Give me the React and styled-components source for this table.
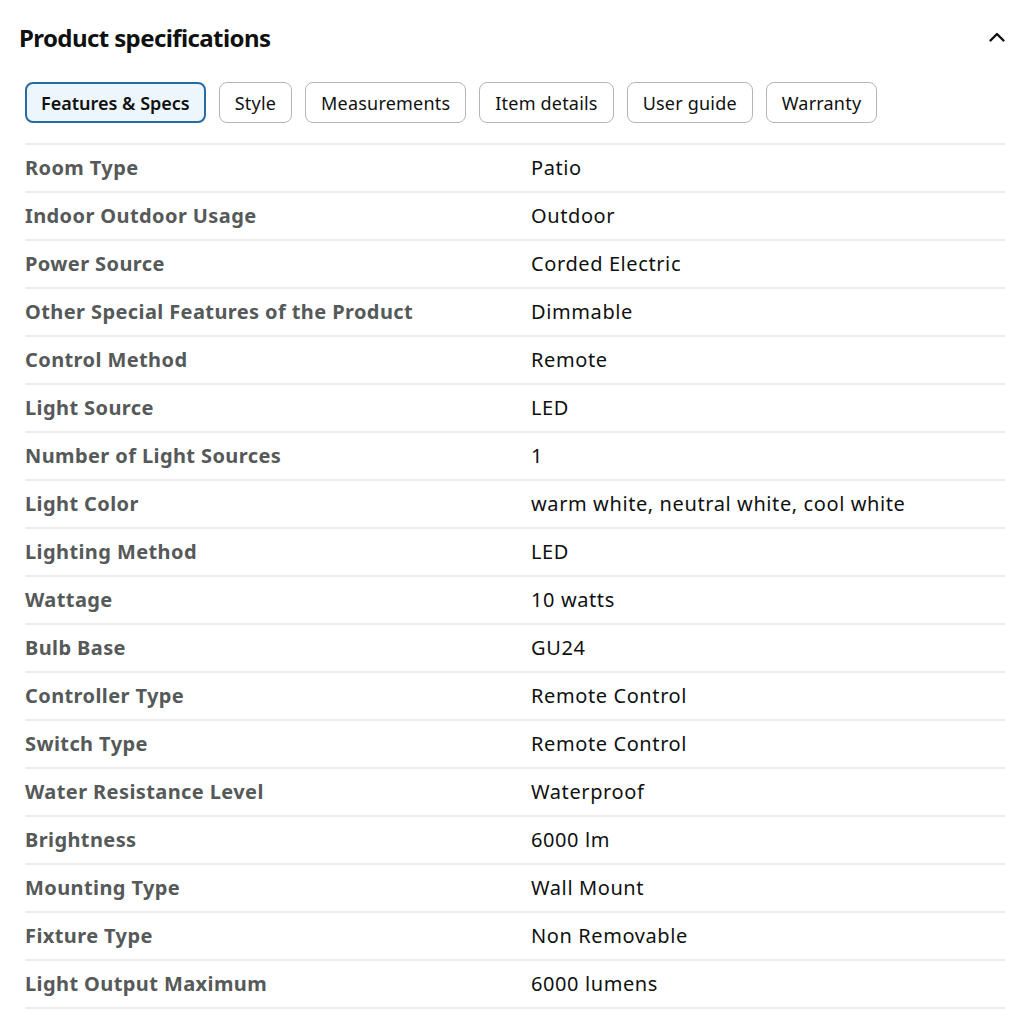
import React from "react";
import styled, { createGlobalStyle } from "styled-components";

const GlobalStyle = createGlobalStyle`
  body {
    margin: 0;
    background: #fff;
    font-family: "Noto Sans", "Open Sans", sans-serif;
  }
`;

const Page = styled.div`
  width: 1024px;
  padding: 0 19px 0 25px;
  box-sizing: border-box;
`;

const Header = styled.div`
  display: flex;
  align-items: center;
  justify-content: space-between;
  height: 74px;
  margin-left: -6px;
`;

const Title = styled.h2`
  margin: 0;
  font-size: 24px;
  font-weight: 700;
  letter-spacing: -0.6px;
  color: #0f1111;
`;

const Chevron = styled.button`
  border: none;
  background: none;
  padding: 0;
  margin-right: -2px;
  display: flex;
  cursor: pointer;
`;

const Tabs = styled.div`
  display: flex;
  gap: 13px;
  padding: 8px 0 20px;
`;

const Tab = styled.button`
  height: 41px;
  padding: 0 ${(p) => (p.$active ? "14px" : "15px")};
  border-radius: 8px;
  font-family: inherit;
  font-size: 18px;
  letter-spacing: ${(p) => (p.$active ? "0" : "0.2px")};
  color: #0f1111;
  cursor: pointer;
  border: ${(p) => (p.$active ? "2px solid #2a6aa2" : "1px solid #b5b5b5")};
  background: ${(p) => (p.$active ? "#edf6fc" : "#fff")};
  font-weight: ${(p) => (p.$active ? 600 : 400)};
`;

const Table = styled.div`
  width: 980px;
  border-top: 2px solid #ececec;
`;

const Row = styled.div`
  display: grid;
  grid-template-columns: 506px 1fr;
  height: 45px;
  padding-bottom: 1px;
  box-sizing: content-box;
  align-items: center;
  border-bottom: 2px solid #ececec;
  font-size: 20px;
`;

const Label = styled.div`
  font-weight: 700;
  color: #565959;
  letter-spacing: 0.4px;
`;

const Value = styled.div`
  color: #0f1111;
  letter-spacing: 0.6px;
`;

const tabs = ["Features & Specs", "Style", "Measurements", "Item details", "User guide", "Warranty"];

const specs = [
  ["Room Type", "Patio"],
  ["Indoor Outdoor Usage", "Outdoor"],
  ["Power Source", "Corded Electric"],
  ["Other Special Features of the Product", "Dimmable"],
  ["Control Method", "Remote"],
  ["Light Source", "LED"],
  ["Number of Light Sources", "1"],
  ["Light Color", "warm white, neutral white, cool white"],
  ["Lighting Method", "LED"],
  ["Wattage", "10 watts"],
  ["Bulb Base", "GU24"],
  ["Controller Type", "Remote Control"],
  ["Switch Type", "Remote Control"],
  ["Water Resistance Level", "Waterproof"],
  ["Brightness", "6000 lm"],
  ["Mounting Type", "Wall Mount"],
  ["Fixture Type", "Non Removable"],
  ["Light Output Maximum", "6000 lumens"],
];

export default function App() {
  return (
    <>
      <GlobalStyle />
      <Page>
        <Header>
          <Title>Product specifications</Title>
          <Chevron aria-label="Collapse">
            <svg width="20" height="20" viewBox="0 0 20 20">
              <path d="M3.5 13.5 L10 7 L16.5 13.5" fill="none" stroke="#0f1111" strokeWidth="2.4" strokeLinecap="round" strokeLinejoin="round" />
            </svg>
          </Chevron>
        </Header>
        <Tabs>
          {tabs.map((t, i) => (
            <Tab key={t} $active={i === 0}>
              {t}
            </Tab>
          ))}
        </Tabs>
        <Table>
          {specs.map(([k, v]) => (
            <Row key={k}>
              <Label>{k}</Label>
              <Value>{v}</Value>
            </Row>
          ))}
        </Table>
      </Page>
    </>
  );
}
